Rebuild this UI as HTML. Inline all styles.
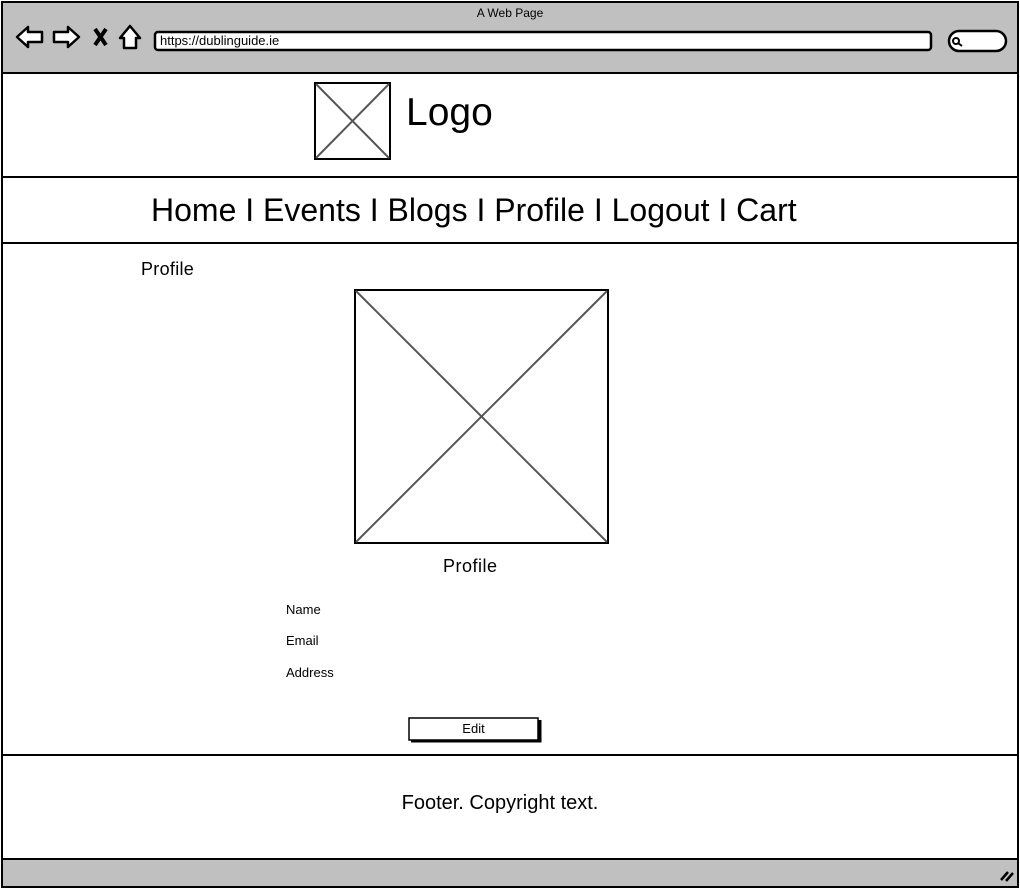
<!DOCTYPE html>
<html><head><style>
*{margin:0;padding:0;box-sizing:border-box}
body{width:1020px;height:890px;background:#fff;position:relative;font-family:"Liberation Sans",sans-serif;overflow:hidden}
.a{position:absolute}
</style></head><body>
<div class="a" style="left:1px;top:1px;width:1018px;height:887px;border:2px solid #000;background:#c0c0c0"></div>
<div class="a" style="left:3px;top:72px;width:1014px;height:788px;background:#fff;border-top:2px solid #000;border-bottom:2px solid #000"></div>
<div class="a" style="left:0;top:6px;width:1020px;text-align:center;font-size:12px">A Web Page</div>
<svg class="a" style="left:0;top:0" width="1020" height="72">
<g fill="#fff" stroke="#000" stroke-width="2.5" stroke-linejoin="round">
<path d="M17 37 L28 27 L28 32 L42 32 L42 42 L28 42 L28 47 Z"/>
<path d="M79 37 L68 27 L68 32 L54 32 L54 42 L68 42 L68 47 Z"/>
<path d="M120 38 L130 26 L140 38 L136 38 L136 48 L124 48 L124 38 Z"/>
<rect x="155" y="32" width="776" height="18" rx="3"/>
<rect x="949" y="31" width="57" height="20" rx="10"/>
</g>
<path d="M95 29 L106 45 M106 29 L95 45" stroke="#000" stroke-width="4"/>
<circle cx="956" cy="41" r="3" fill="none" stroke="#000" stroke-width="2"/>
<line x1="958" y1="43" x2="962" y2="46" stroke="#000" stroke-width="2"/>
</svg>
<div class="a" style="left:160px;top:33px;font-size:13px">https://dublinguide.ie</div>
<svg class="a" style="left:0;top:0" width="1020" height="890">
<rect x="315" y="83" width="75" height="76" fill="none" stroke="#000" stroke-width="2"/>
<path d="M316 84 L389 158 M389 84 L316 158" stroke="#555" stroke-width="2"/>
<rect x="355" y="290" width="253" height="253" fill="none" stroke="#000" stroke-width="2"/>
<path d="M356 291 L607 542 M607 291 L356 542" stroke="#555" stroke-width="2"/>
<line x1="3" y1="177" x2="1017" y2="177" stroke="#000" stroke-width="2"/>
<line x1="3" y1="243" x2="1017" y2="243" stroke="#000" stroke-width="2"/>
<line x1="3" y1="755" x2="1017" y2="755" stroke="#000" stroke-width="2"/>
<rect x="409" y="718" width="129" height="22" fill="#fff" stroke="#000" stroke-width="1.5"/>
<path d="M411 741 L540 741 L540 720" stroke="#000" stroke-width="3" fill="none"/>
<path d="M1001 880 L1008 872 M1006 881 L1013 873" stroke="#000" stroke-width="2.5"/>
</svg>
<div class="a" style="left:406px;top:91px;font-size:39px">Logo</div>
<div class="a" style="left:151px;top:192px;font-size:32px">Home I Events I Blogs I Profile I Logout I Cart</div>
<div class="a" style="left:141px;top:259px;font-size:18px;letter-spacing:0.3px">Profile</div>
<div class="a" style="left:443px;top:556px;font-size:18px;letter-spacing:0.5px">Profile</div>
<div class="a" style="left:286px;top:602px;font-size:13px">Name</div>
<div class="a" style="left:286px;top:633px;font-size:13px">Email</div>
<div class="a" style="left:286px;top:665px;font-size:13px">Address</div>
<div class="a" style="left:409px;top:721px;width:129px;text-align:center;font-size:13px">Edit</div>
<div class="a" style="left:0;top:792px;width:1000px;text-align:center;font-size:20px">Footer. Copyright text.</div>
</body></html>
